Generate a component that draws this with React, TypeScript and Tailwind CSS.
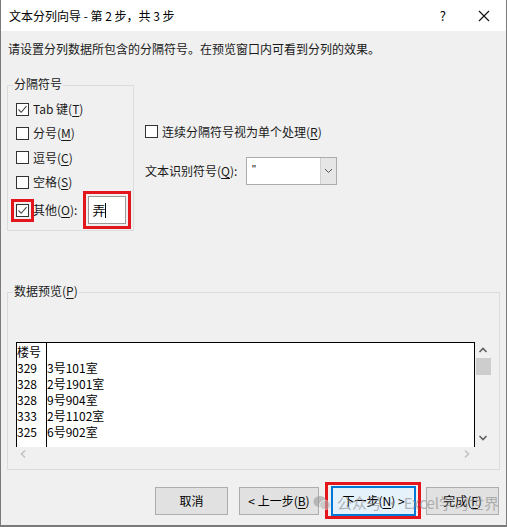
import React from "react";

const CJK = { fontFamily: '"Noto Sans CJK SC", "Microsoft YaHei", sans-serif' };

function Check({ checked }: { checked?: boolean }) {
  return (
    <div className="w-[13px] h-[13px] border border-[#333333] bg-white flex items-center justify-center shrink-0">
      {checked && (
        <svg width="11" height="11" viewBox="0 0 11 11">
          <path d="M1.5 5.5 L4.2 8.3 L9.5 2.2" fill="none" stroke="#444" strokeWidth="1.1" />
        </svg>
      )}
    </div>
  );
}

function U({ children }: { children: React.ReactNode }) {
  return <span className="underline underline-offset-[2px] decoration-[1px]">{children}</span>;
}

function Chevron({ dir, color = "#606060" }: { dir: "up" | "down" | "left" | "right"; color?: string }) {
  const paths: Record<string, string> = {
    up: "M1.5 6 L5 2.5 L8.5 6",
    down: "M1.5 3 L5 6.5 L8.5 3",
    left: "M6 1.5 L2.5 5 L6 8.5",
    right: "M3 1.5 L6.5 5 L3 8.5",
  };
  return (
    <svg width="10" height="10" viewBox="0 0 10 10">
      <path d={paths[dir]} fill="none" stroke={color} strokeWidth="1.6" />
    </svg>
  );
}

const rows: [string, string][] = [
  ["楼号", ""],
  ["329", "3号101室"],
  ["328", "2号1901室"],
  ["328", "9号904室"],
  ["333", "2号1102室"],
  ["325", "6号902室"],
];

export default function App() {
  return (
    <div
      className="w-[507px] h-[527px] bg-[#f0f0f0] border-x border-b-2 border-[#7a7a7a] flex flex-col text-[12px] text-[#1a1a1a] relative overflow-hidden"
      style={CJK}
    >
      {/* Title bar */}
      <div className="h-[31px] bg-white flex items-center pl-[8px] shrink-0">
        <span className="text-[12px] text-black whitespace-pre">文本分列向导 - 第 2 步，共 3 步</span>
        <span className="ml-auto mr-[32px] text-[13px] text-black">?</span>
        <svg width="12" height="12" viewBox="0 0 12 12" className="mr-[16px]">
          <path d="M1 1 L11 11 M11 1 L1 11" stroke="#111" strokeWidth="1.1" />
        </svg>
      </div>

      {/* Instruction */}
      <div className="pl-[7px] pt-[9px] leading-[17px]">
        请设置分列数据所包含的分隔符号。在预览窗口内可看到分列的效果。
      </div>

      {/* Top section */}
      <div className="flex mt-[28px] ml-[6px]">
        <div className="relative w-[127px] h-[146px] border border-[#dcdcdc] pl-[8px] pt-[11px] flex flex-col">
          <span className="absolute -top-[10px] left-[5px] px-[1px] bg-[#f0f0f0] leading-[16px]">分隔符号</span>
          <div className="h-[24px] flex items-center gap-[4px]">
            <Check checked />
            <span>Tab 键(<U>T</U>)</span>
          </div>
          <div className="h-[24px] flex items-center gap-[4px]">
            <Check />
            <span>分号(<U>M</U>)</span>
          </div>
          <div className="h-[25px] flex items-center gap-[4px]">
            <Check />
            <span>逗号(<U>C</U>)</span>
          </div>
          <div className="h-[24px] flex items-center gap-[4px]">
            <Check />
            <span>空格(<U>S</U>)</span>
          </div>
          <div className="h-[32px] flex items-center">
            <div className="relative">
              <Check checked />
              <div className="absolute -left-[5px] -right-[5px] -top-[5px] -bottom-[5px] border-[3px] border-[#e3151d]" />
            </div>
            <span className="ml-[4px]">其他(<U>O</U>):</span>
            <div className="relative ml-[11px]">
              <div className="w-[38px] h-[28px] bg-white border border-[#9a9a9a] flex items-center pl-[3px] text-[13px] text-black">
                弄<span className="w-[1px] h-[15px] bg-black" />
              </div>
              <div className="absolute -left-[5px] -right-[5px] -top-[5px] -bottom-[5px] border-[3px] border-[#e3151d]" />
            </div>
          </div>
        </div>

        <div className="ml-[11px] flex flex-col">
          <div className="mt-[38px] h-[17px] flex items-center gap-[4px]">
            <Check />
            <span>连续分隔符号视为单个处理(<U>R</U>)</span>
          </div>
          <div className="mt-[17px] h-[28px] flex items-center">
            <span className="w-[101px]">文本识别符号(<U>Q</U>):</span>
            <div className="w-[91px] h-[28px] border border-[#acacac] bg-white flex">
              <div className="flex-1 pl-[5px] pt-[3px] text-[11px] text-black" style={{ fontFamily: '"Liberation Sans", sans-serif' }}>
                "
              </div>
              <div className="w-[16px] bg-[#e6e6e6] border-l border-[#d0d0d0] flex items-center justify-center">
                <svg width="9" height="6" viewBox="0 0 9 6">
                  <path d="M1 1 L4.5 4.5 L8 1" fill="none" stroke="#555" strokeWidth="1" />
                </svg>
              </div>
            </div>
          </div>
        </div>
      </div>

      {/* Preview group */}
      <div className="relative mt-[61px] ml-[6px] w-[493px] h-[178px] border border-[#dcdcdc] pl-[8px] pt-[49px]">
        <span className="absolute -top-[10px] left-[5px] px-[1px] bg-[#f0f0f0] leading-[16px]">
          数据预览(<U>P</U>)
        </span>
        <div className="flex">
          <div className="w-[459px] h-[105px] bg-white border-x border-t border-black flex">
            <div className="w-[30px] border-r border-black pt-[1px] flex flex-col">
              {rows.map((r, i) => (
                <div key={i} className="h-[16px] leading-[16px] text-black">{r[0]}</div>
              ))}
            </div>
            <div className="flex-1 pt-[1px] flex flex-col">
              {rows.map((r, i) => (
                <div key={i} className="h-[16px] leading-[16px] text-black">{r[1]}</div>
              ))}
            </div>
          </div>
          <div className="w-[16px] h-[105px] flex flex-col items-center">
            <div className="h-[16px] flex items-center justify-center pt-[2px]">
              <Chevron dir="up" />
            </div>
            <div className="w-[15px] h-[17px] bg-[#cdcdcd]" />
            <div className="mt-auto h-[18px] flex items-center justify-center">
              <Chevron dir="down" />
            </div>
          </div>
        </div>
        <div className="w-[459px] h-[14px] flex items-center justify-between px-[3px]">
          <Chevron dir="left" color="#c2c2c2" />
          <Chevron dir="right" color="#c2c2c2" />
        </div>
      </div>

      {/* Buttons */}
      <div className="flex mt-[17px] ml-[154px]">
        <button className="w-[73px] h-[28px] bg-[#e1e1e1] border border-[#adadad] text-black">取消</button>
        <button className="ml-[11px] w-[80px] h-[28px] bg-[#e1e1e1] border border-[#adadad] text-black">
          &lt; 上一步(<U>B</U>)
        </button>
        <div className="relative ml-[12px]">
          <button className="w-[85px] h-[30px] -mt-[1px] bg-[#e5f1fb] border-2 border-[#0078d7] text-black">
            下一步(<U>N</U>) &gt;
          </button>
          <div className="absolute -left-[6px] -right-[5px] -top-[5px] -bottom-[3px] border-[3px] border-[#e3151d]" />
        </div>
        <button className="ml-[10px] w-[73px] h-[28px] bg-[#e1e1e1] border border-[#adadad] text-black">
          完成(<U>F</U>)
        </button>
      </div>

      {/* Watermark */}
      <div className="absolute left-[312px] top-[492px] flex items-center gap-[6px] text-[15px] text-[#8a8a8a] opacity-60 pointer-events-none whitespace-nowrap">
        <svg width="18" height="16" viewBox="0 0 18 16">
          <ellipse cx="7" cy="6.5" rx="6.5" ry="5.5" fill="#9a9a9a" />
          <ellipse cx="12" cy="10" rx="5.5" ry="4.6" fill="#b5b5b5" stroke="#f0f0f0" strokeWidth="0.8" />
        </svg>
        <span>公众号 · Excel学习世界</span>
      </div>
    </div>
  );
}
